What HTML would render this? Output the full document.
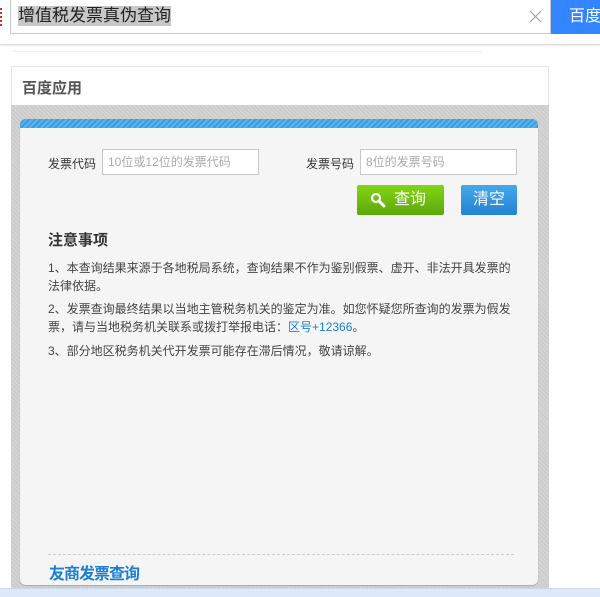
<!DOCTYPE html>
<html><head><meta charset="utf-8"><style>
*{margin:0;padding:0;box-sizing:border-box}
body{width:600px;height:597px;overflow:hidden;background:#fff;position:relative;font-family:"Liberation Sans","Noto Sans CJK SC",sans-serif;color:#333}
.abs{position:absolute}
.hdr{left:0;top:0;width:600px;height:44px;background:#fff;box-shadow:0 1px 2px rgba(0,0,0,.2)}
.sbox{left:10px;top:0;width:541px;height:34px;border:1px solid #c4c7ce;border-top:none}
.sbox span{position:absolute;left:7px;top:6px;font-size:17px;background:#c8c8c8;color:#222;line-height:20px}
.btn{left:551px;top:0;width:49px;height:34px;background:#3385ff;color:#fff;font-size:16px;line-height:34px;padding-left:18px;white-space:nowrap;overflow:hidden}
.card{left:11px;top:66px;width:538px;height:531px;border:1px solid #e5e5e5;border-bottom:none}
.grey{left:11px;top:105px;width:538px;height:483px;background-color:#d4d4d4;background-image:repeating-linear-gradient(45deg,#c8c8c8 0 1px,transparent 1px 3px)}
.panel{left:20px;top:119px;width:518px;height:466px;background:#f5f5f5;border-radius:6px;overflow:hidden;box-shadow:0 1px 1px #aaa}
.bar{left:0;top:0;width:518px;height:9px;background:#3a9de0;background-image:repeating-linear-gradient(135deg,#5ab4ec 0 2px,#3a9de0 2px 4px)}
.lbl{font-size:12px;color:#333}
.inp{height:26px;border:1px solid #c8c8c8;background:#fff;font-size:12px;color:#aaa;line-height:24px;padding-left:5px}
.p{font-size:12px;line-height:18px;color:#444;left:48px;width:470px}
.bottom{left:0;top:588px;width:600px;height:9px;background:#dce9f8;border-top:1px solid #c9d8ea}
</style></head><body>
<div class="abs hdr"></div>
<div class="abs" style="left:0;top:8px;width:3px;height:18px;border-left:2px dotted #c33"></div>
<div class="abs sbox"><span>增值税发票真伪查询</span>
<svg class="abs" style="left:518px;top:10px" width="13" height="13"><path d="M1 1L12 12M12 1L1 12" stroke="#999" stroke-width="1"/></svg></div>
<div class="abs btn">百度一下</div>
<div class="abs" style="left:12px;top:51px;width:470px;height:1px;background:#eee"></div>
<div class="abs card"></div>
<div class="abs" style="left:22px;top:77px;font-size:15px;color:#555;font-weight:bold">百度应用</div>
<div class="abs grey"></div>
<div class="abs panel">
 <div class="abs bar"></div>
</div>
<div class="abs lbl" style="left:48px;top:155px">发票代码</div>
<div class="abs inp" style="left:102px;top:149px;width:157px">10位或12位的发票代码</div>
<div class="abs lbl" style="left:306px;top:155px">发票号码</div>
<div class="abs inp" style="left:360px;top:149px;width:157px">8位的发票号码</div>
<div class="abs" style="left:357px;top:185px;width:87px;height:30px;background:linear-gradient(#84d415,#5ca80a);border-radius:2px;color:#fff;font-size:16px;line-height:30px;padding-left:37px">查询
<svg class="abs" style="left:13px;top:7px" width="16" height="16"><circle cx="6" cy="6" r="4" stroke="#fff" stroke-width="2.2" fill="none"/><path d="M9 9L14 14" stroke="#fff" stroke-width="3" stroke-linecap="round"/></svg></div>
<div class="abs" style="left:461px;top:185px;width:56px;height:30px;background:linear-gradient(#45a8ec,#2483d0);border-radius:2px;color:#fff;font-size:16px;line-height:30px;text-align:center">清空</div>
<div class="abs" style="left:48px;top:229px;font-size:15px;font-weight:bold;color:#333">注意事项</div>
<div class="abs p" style="top:259px">1、本查询结果来源于各地税局系统，查询结果不作为鉴别假票、虚开、非法开具发票的法律依据。</div>
<div class="abs p" style="top:300px">2、发票查询最终结果以当地主管税务机关的鉴定为准。如您怀疑您所查询的发票为假发票，请与当地税务机关联系或拨打举报电话：<span style="color:#1a7fd4">区号+12366</span>。</div>
<div class="abs p" style="top:342px">3、部分地区税务机关代开发票可能存在滞后情况，敬请谅解。</div>
<div class="abs" style="left:48px;top:554px;width:466px;border-top:1px dashed #ccc"></div>
<div class="abs" style="left:49px;top:560px;font-size:16px;font-weight:bold;color:#1a7fd4;letter-spacing:-1px">友商发票查询</div>
<div class="abs bottom"></div>
</body></html>
